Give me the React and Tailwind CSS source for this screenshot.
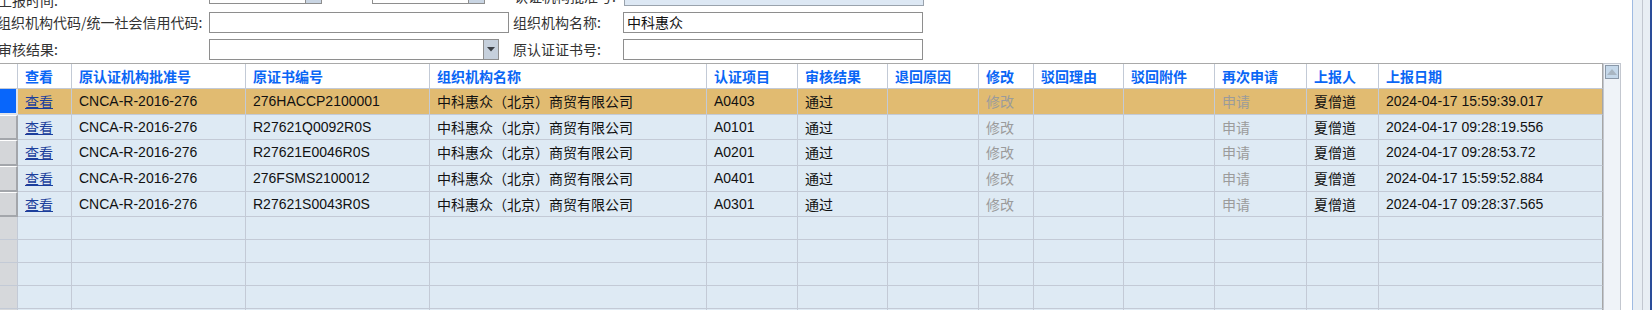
import React from "react";

const FONT = { fontFamily: '"Liberation Sans", "Noto Sans CJK SC", sans-serif' };
const CJK = { fontFamily: '"Noto Sans CJK SC", "Liberation Sans", sans-serif' };

const GRID = "grid grid-cols-[18px_54px_174px_184px_277px_91px_90px_91px_55px_90px_91px_92px_72px_224px]";

const headers = ["", "查看", "原认证机构批准号", "原证书编号", "组织机构名称", "认证项目", "审核结果", "退回原因", "修改", "驳回理由", "驳回附件", "再次申请", "上报人", "上报日期"];

const rows = [
  ["CNCA-R-2016-276", "276HACCP2100001", "A0403", "2024-04-17 15:59:39.017"],
  ["CNCA-R-2016-276", "R27621Q0092R0S", "A0101", "2024-04-17 09:28:19.556"],
  ["CNCA-R-2016-276", "R27621E0046R0S", "A0201", "2024-04-17 09:28:53.72"],
  ["CNCA-R-2016-276", "276FSMS2100012", "A0401", "2024-04-17 15:59:52.884"],
  ["CNCA-R-2016-276", "R27621S0043R0S", "A0301", "2024-04-17 09:28:37.565"],
];
const rowH = ["h-[26px]", "h-[25px]", "h-[26px]", "h-[26px]", "h-[25px]"];
const emptyH = ["h-[23px]", "h-[23px]", "h-[23px]", "h-[23px]", "h-[23px]"];

function Cell({ children, className = "", last }) {
  return (
    <div
      className={
        "flex items-center px-[7px] whitespace-nowrap overflow-hidden border-b border-[#c3cad6] " +
        (last ? "border-r border-r-[#a6a6a6] " : "border-r ") +
        className
      }
    >
      {children}
    </div>
  );
}

function Label({ children, className = "" }) {
  return (
    <span className={"text-[14px] leading-[21px] text-[#333] whitespace-nowrap " + className} style={CJK}>
      {children}
    </span>
  );
}

function Box({ className = "", children }) {
  return (
    <div className={"h-[21px] shrink-0 border border-[#8e8e8e] bg-white flex items-center " + className}>{children}</div>
  );
}

export default function App() {
  return (
    <div className="w-[1652px] h-[310px] overflow-hidden bg-white flex" style={FONT}>
      <div className="w-[1621px] flex flex-col shrink-0">
        {/* form */}
        <div className="-mt-[15px] flex flex-col gap-[6px]">
          {/* row 1 */}
          <div className="flex h-[21px] items-start">
            <div className="w-[209px] min-w-0 shrink-0 pt-[4px]">
              <Label className="-ml-[2px]">上报时间:</Label>
            </div>
            <div className="flex shrink-0 h-[19px] border border-[#8e8e8e] w-[113px]">
              <div className="flex-1 bg-white" />
              <div className="w-[16px] bg-[#c9d5e3] border-l border-[#8e8e8e]" />
            </div>
            <div className="w-[50px] shrink-0 flex justify-center -mt-[3px]">
              <Label className="font-bold text-[#111]">至</Label>
            </div>
            <div className="flex shrink-0 h-[19px] border border-[#8e8e8e] w-[113px]">
              <div className="flex-1 bg-white" />
              <div className="w-[16px] bg-[#c9d5e3] border-l border-[#8e8e8e]" />
            </div>
            <div className="w-[29px] shrink-0" />
            <div className="w-[110px] min-w-0 shrink-0">
              <Label>认证机构批准号:</Label>
            </div>
            <Box className="w-[300px] !bg-[#dde8f4] border-[#9aa3ad]" />
          </div>
          {/* row 2 */}
          <div className="flex h-[21px] items-center">
            <div className="w-[209px] min-w-0 shrink-0">
              <Label className="-ml-[3px]">组织机构代码/统一社会信用代码:</Label>
            </div>
            <Box className="w-[300px]" />
            <div className="w-[4px] shrink-0" />
            <div className="w-[110px] min-w-0 shrink-0">
              <Label>组织机构名称:</Label>
            </div>
            <Box className="w-[300px] px-[3px]">
              <span className="text-[14px] text-[#111]" style={CJK}>中科惠众</span>
            </Box>
          </div>
          {/* row 3 */}
          <div className="flex h-[21px] items-center">
            <div className="w-[209px] min-w-0 shrink-0">
              <Label className="-ml-[2px]">审核结果:</Label>
            </div>
            <Box className="w-[290px] justify-end">
              <div className="w-[15px] h-[19px] bg-[#c6d0dc] border-l border-[#8e8e8e] flex items-center justify-center">
                <svg width="8" height="5" viewBox="0 0 8 5">
                  <path d="M0 0 H8 L4 4.5 Z" fill="#3b3f45" />
                </svg>
              </div>
            </Box>
            <div className="w-[14px] shrink-0" />
            <div className="w-[110px] min-w-0 shrink-0">
              <Label>原认证证书号:</Label>
            </div>
            <Box className="w-[300px]" />
          </div>
        </div>

        {/* grid */}
        <div className="mt-[3px] flex flex-1">
          <div className="w-[1603px] border-t border-[#a9a9a9] flex flex-col">
            <div className={GRID + " h-[25px] bg-white"}>
              {headers.map((h, i) => (
                <Cell key={i} last={i === headers.length - 1} className="font-bold text-[14px] text-[#0a66f5]">
                  <span style={CJK}>{h}</span>
                </Cell>
              ))}
            </div>
            {rows.map((r, ri) => {
              const sel = ri === 0;
              const bg = sel ? "bg-[#e1bb71]" : "bg-[#deeaf4]";
              return (
                <div key={ri} className={GRID + " " + rowH[ri]}>
                  {sel ? (
                    <div className="bg-[#0866fb] border-r-2 border-b-2 border-[#dfe3ea]" />
                  ) : (
                    <div className="bg-[#d4d6d9] border-r-2 border-b-2 border-[#a3a6ab] border-t border-t-white" />
                  )}
                  <Cell className={bg}>
                    <span className="text-[14px] text-[#1c3f9c] underline" style={CJK}>查看</span>
                  </Cell>
                  <Cell className={bg + " text-[14px] text-[#111]"}>{r[0]}</Cell>
                  <Cell className={bg + " text-[14px] text-[#111]"}>{r[1]}</Cell>
                  <Cell className={bg + " text-[14px] text-[#111]"}>
                    <span style={CJK}>中科惠众（北京）商贸有限公司</span>
                  </Cell>
                  <Cell className={bg + " text-[14px] text-[#111]"}>{r[2]}</Cell>
                  <Cell className={bg + " text-[14px] text-[#111]"}>
                    <span style={CJK}>通过</span>
                  </Cell>
                  <Cell className={bg} />
                  <Cell className={bg + " text-[14px] text-[#9b9b9b]"}>
                    <span style={CJK}>修改</span>
                  </Cell>
                  <Cell className={bg} />
                  <Cell className={bg} />
                  <Cell className={bg + " text-[14px] text-[#9b9b9b]"}>
                    <span style={CJK}>申请</span>
                  </Cell>
                  <Cell className={bg + " text-[14px] text-[#111]"}>
                    <span style={CJK}>夏僧道</span>
                  </Cell>
                  <Cell last className={bg + " text-[14px] text-[#111]"}>{r[3]}</Cell>
                </div>
              );
            })}
            {emptyH.map((h, ei) => (
              <div key={"e" + ei} className={GRID + " " + h}>
                <div className="bg-[#d6d8db] border-b border-r border-[#c3cad6]" />
                {headers.slice(1).map((_, ci) => (
                  <Cell key={ci} last={ci === headers.length - 2} className="bg-[#deeaf4]" />
                ))}
              </div>
            ))}
          </div>
          {/* scrollbar */}
          <div className="w-[18px] bg-[#eff3f8] border-t border-l border-r border-[#c3c7cf] pt-[1px] flex justify-center">
            <div className="w-[14px] h-[14px] bg-[#c5d8ea] border border-[#8a98a8] flex items-center justify-center">
              <svg width="10" height="6" viewBox="0 0 10 6">
                <path d="M0 6 L5 0 L10 6 Z" fill="#a9b6c2" />
              </svg>
            </div>
          </div>
        </div>
      </div>
      <div className="w-[11px] shrink-0 bg-white" />
      <div className="w-[1px] bg-[#9fbbe2]" />
      <div className="w-[9px] bg-[#e8eef4]" />
      <div className="w-[1px] bg-[#c2c7d0]" />
      <div className="w-[7px] bg-[#e8eef4]" />
      <div className="w-[2px] bg-[#2a4c99]" />
    </div>
  );
}
